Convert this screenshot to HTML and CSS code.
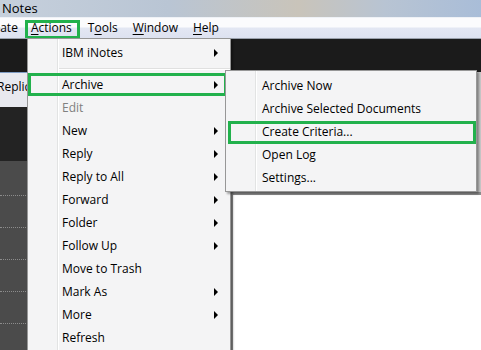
FILE: index.html
```html
<!DOCTYPE html>
<html lang="en">
<head>
<meta name="viewport" content="width=device-width, initial-scale=1">
<title>Notes - Actions menu</title>
  <link rel="stylesheet" href="styles.css">
</head>
<body>

<div class="titlebar">Notes</div>

<div class="menubar">
  <span class="mb cut">Create</span>
  <span class="mb active"><u>A</u>ctions</span>
  <span class="mb">T<u>o</u>ols</span>
  <span class="mb"><u>W</u>indow</span>
  <span class="mb"><u>H</u>elp</span>
</div>

<div class="band"></div>

<div class="work">
  <div class="nav">
    <div class="strip"><span class="strip-text">Replicate</span></div>
    <div class="darkpane"></div>
    <div class="list">
      <div class="row"></div>
      <div class="row"></div>
      <div class="row"></div>
      <div class="row"></div>
      <div class="row"></div>
    </div>
  </div>
  <div class="doc">
    <div class="doc-top"></div>
    <div class="doc-page"></div>
  </div>
</div>

<!-- Actions dropdown -->
<div class="menu main-menu">
  <div class="item">IBM iNotes <span class="arrow"></span></div>
  <div class="sep"></div>
  <div class="item boxed">Archive <span class="arrow"></span></div>
  <div class="item disabled">Edit</div>
  <div class="item">New <span class="arrow"></span></div>
  <div class="item">Reply <span class="arrow"></span></div>
  <div class="item">Reply to All <span class="arrow"></span></div>
  <div class="item">Forward <span class="arrow"></span></div>
  <div class="item">Folder <span class="arrow"></span></div>
  <div class="item">Follow Up <span class="arrow"></span></div>
  <div class="item">Move to Trash</div>
  <div class="item">Mark As <span class="arrow"></span></div>
  <div class="item">More <span class="arrow"></span></div>
  <div class="item">Refresh</div>
</div>

<!-- Archive submenu -->
<div class="menu sub-menu">
  <div class="item">Archive Now</div>
  <div class="item">Archive Selected Documents</div>
  <div class="item boxed">Create Criteria...</div>
  <div class="item">Open Log</div>
  <div class="item">Settings...</div>
</div>

</body>
</html>
```

FILE: styles.css
```css
body {
  margin: 0;
  width: 481px;
  height: 350px;
  overflow: hidden;
  position: relative;
  font-family: 'Open Sans', 'Noto Sans', sans-serif;
  font-size: 12px;
  color: #000;
  background: #4a4a4a;
}

.titlebar {
  height: 17px;
  line-height: 16px;
  padding-left: 2px;
  font-size: 13px;
  border-bottom: 1px solid #eef1f6;
  background: linear-gradient(to right, #c6d0dc, #b9c5d4 35%, #c9c4ba 62%, #b8c4d3 80%, #a9bdd8);
}

.menubar {
  height: 20px;
  display: flex;
  align-items: center;
  overflow: hidden;
  background: linear-gradient(#fbfbfd 0, #fbfbfd 45%, #e3e7f3 50%, #dde2f0 100%);
}
.mb {
  position: relative;
  padding: 0 7px 0 8px;
  line-height: 20px;
}
.mb u { text-decoration-thickness: 1px; text-underline-offset: 2px; }
.mb.cut { margin-left: -27px; }
.mb.active { padding: 0 8px 0 6px; }
.mb.active::after {
  content: '';
  position: absolute;
  left: 0;
  right: 0;
  top: 2px;
  bottom: -1px;
  border: 3px solid #22b14c;
}

.band {
  height: 33px;
  background: #1b1b1b;
  border-top: 1px solid #9aa0ab;
}

.work {
  display: flex;
  height: 278px;
}
.nav {
  width: 230px;
  display: flex;
  flex-direction: column;
}
.strip {
  height: 34px;
  line-height: 28px;
  background: #e8e9ef;
  border-top: 1px solid #7f9cc4;
  overflow: hidden;
  white-space: nowrap;
}
.strip-text { margin-left: -3px; }
.darkpane {
  height: 54px;
  background: #232323;
}
.list {
  flex: 1;
  background: #4b4b4b;
  padding-top: 3px;
  overflow: hidden;
}
.row {
  height: 31px;
  border-bottom: 1px dotted #8c8c8c;
}

.doc {
  flex: 1;
  display: flex;
  flex-direction: column;
}
.doc-top {
  height: 120px;
  background: #c9c9c9;
}
.doc-page {
  flex: 1;
  background: #fff;
  border-top: 3px solid #8e8e8e;
  border-left: 3px solid #8e8e8e;
}

/* dropdown menus */
.menu {
  position: absolute;
  border: 1px solid #979797;
  box-shadow: 2px 2px 2px rgba(0, 0, 0, 0.35);
  overflow: hidden;
  background:
    linear-gradient(to right, transparent 29px, #e2e3e3 29px, #e2e3e3 30px, #ffffff 30px, #ffffff 31px, transparent 31px),
    #f4f4f5;
}
.main-menu {
  left: 27px;
  top: 38px;
  width: 202px;
  padding-top: 2px;
  height: 309px;
}
.sub-menu {
  left: 225px;
  top: 70px;
  width: 250px;
  padding: 3px 0 2px;
}
.item {
  position: relative;
  height: 23px;
  display: flex;
  align-items: center;
  justify-content: space-between;
  padding: 0 12px 0 34px;
  white-space: nowrap;
}
.sub-menu .item { padding-left: 36px; }
.item.disabled { color: #808080; }
.arrow {
  width: 0;
  height: 0;
  border-left: 4px solid #000;
  border-top: 4px solid transparent;
  border-bottom: 4px solid transparent;
}
.sep {
  height: 9px;
  margin-left: 31px;
  background: linear-gradient(transparent 4px, #e0e0e0 4px, #e0e0e0 5px, #fff 5px, #fff 6px, transparent 6px);
}

/* annotation boxes */
.item.boxed::after {
  content: '';
  position: absolute;
  left: 0;
  right: 3px;
  top: 0;
  bottom: 0;
  border: 3px solid #22b14c;
}
.sub-menu .item.boxed::after {
  left: 2px;
  right: 0;
  top: 1px;
  bottom: -1px;
}
```
